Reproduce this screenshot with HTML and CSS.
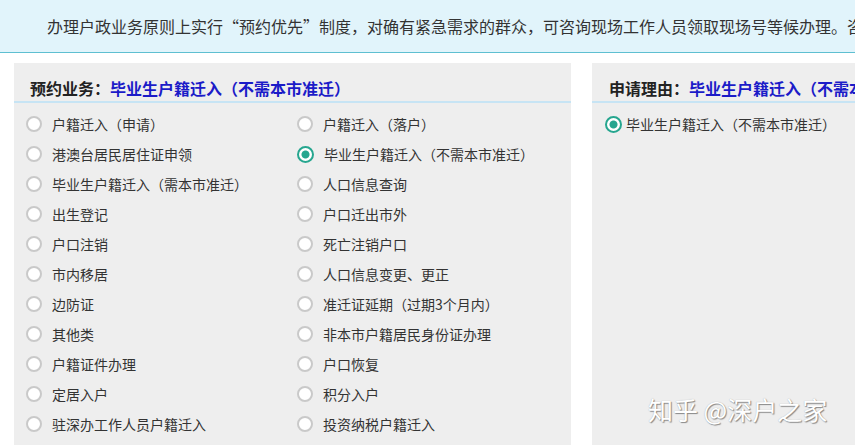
FILE: index.html
```html
<!DOCTYPE html>
<html lang="zh-CN">
<head>
    <meta charset="UTF-8">
    <meta name="viewport" content="width=device-width, initial-scale=1.0">
    <title>预约业务</title>
    <link rel="stylesheet" href="styles.css">
</head>
<body>
    <div class="notice">办理户政业务原则上实行“预约优先”制度，对确有紧急需求的群众，可咨询现场工作人员领取现场号等候办理。咨询电话请拨打当地派出所户籍窗口。</div>

    <div class="main">
        <div class="panel panel-left">
            <div class="panel-title">预约业务：<span class="sel">毕业生户籍迁入（不需本市准迁）</span></div>
            <div class="options">
                <label class="opt"><span class="radio"></span>户籍迁入（申请）</label>
                <label class="opt"><span class="radio"></span>户籍迁入（落户）</label>
                <label class="opt"><span class="radio"></span>港澳台居民居住证申领</label>
                <label class="opt"><span class="radio on"></span>毕业生户籍迁入（不需本市准迁）</label>
                <label class="opt"><span class="radio"></span>毕业生户籍迁入（需本市准迁）</label>
                <label class="opt"><span class="radio"></span>人口信息查询</label>
                <label class="opt"><span class="radio"></span>出生登记</label>
                <label class="opt"><span class="radio"></span>户口迁出市外</label>
                <label class="opt"><span class="radio"></span>户口注销</label>
                <label class="opt"><span class="radio"></span>死亡注销户口</label>
                <label class="opt"><span class="radio"></span>市内移居</label>
                <label class="opt"><span class="radio"></span>人口信息变更、更正</label>
                <label class="opt"><span class="radio"></span>边防证</label>
                <label class="opt"><span class="radio"></span>准迁证延期（过期3个月内）</label>
                <label class="opt"><span class="radio"></span>其他类</label>
                <label class="opt"><span class="radio"></span>非本市户籍居民身份证办理</label>
                <label class="opt"><span class="radio"></span>户籍证件办理</label>
                <label class="opt"><span class="radio"></span>户口恢复</label>
                <label class="opt"><span class="radio"></span>定居入户</label>
                <label class="opt"><span class="radio"></span>积分入户</label>
                <label class="opt"><span class="radio"></span>驻深办工作人员户籍迁入</label>
                <label class="opt"><span class="radio"></span>投资纳税户籍迁入</label>
            </div>
        </div>

        <div class="panel panel-right">
            <div class="panel-title">申请理由：<span class="sel">毕业生户籍迁入（不需本市准迁）</span></div>
            <div class="reasons">
                <label class="opt tight"><span class="radio on"></span>毕业生户籍迁入（不需本市准迁）</label>
            </div>
        </div>
    </div>

    <div class="watermark">知乎 @深户之家</div>
</body>
</html>
```

FILE: styles.css
```css
body {
    margin: 0;
    font-family: "Microsoft YaHei", "Noto Sans CJK SC", sans-serif;
    color: #333;
    background: #fff;
    overflow: hidden;
    width: 855px;
    height: 445px;
    position: relative;
}
.notice {
    background-color: #e1f4fb;
    border-bottom: 1px solid #5ebfd1;
    height: 52px;
    line-height: 52px;
    padding-left: 47px;
    font-size: 16px;
    white-space: nowrap;
    overflow: hidden;
}
.main {
    display: flex;
    gap: 21px;
    padding: 10px 0 0 14px;
}
.panel {
    background-color: #eeeeee;
    height: 390px;
    flex-shrink: 0;
}
.panel-left {
    width: 557px;
}
.panel-right {
    width: 300px;
}
.panel-title {
    height: 38px;
    line-height: 50px;
    padding-left: 16px;
    font-size: 16px;
    font-weight: bold;
    color: #222;
    border-bottom: 2px solid #c7e4f4;
    white-space: nowrap;
    overflow: hidden;
}
.panel-right .panel-title {
    padding-left: 17px;
}
.sel {
    color: #1b1bc8;
}
.options {
    display: grid;
    grid-template-columns: 271px 271px;
    padding: 6px 0 0 12px;
}
.opt {
    display: flex;
    align-items: center;
    height: 30px;
    font-size: 14px;
    white-space: nowrap;
}
.radio {
    width: 12px;
    height: 12px;
    border: 2px solid #c9c9c9;
    border-radius: 50%;
    background: #fff;
    margin-right: 10px;
    flex-shrink: 0;
}
.radio.on {
    width: 13px;
    height: 13px;
    border-color: #26a68f;
    background: radial-gradient(circle, #26a68f 0 3.5px, #fff 4.5px);
}
.reasons {
    padding: 6px 0 0 13px;
}
.opt.tight .radio {
    margin-right: 4px;
}
.watermark {
    position: absolute;
    left: 648px;
    top: 391px;
    font-size: 25px;
    color: #fff;
    text-shadow: 1px 1px 1px #888, 0 0 1px #aaa;
    white-space: nowrap;
}
```
